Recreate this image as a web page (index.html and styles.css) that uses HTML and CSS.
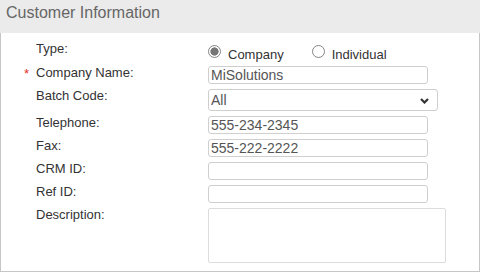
FILE: index.html
```html
<!DOCTYPE html>
<html lang="en">
  <head>
    <meta charset="UTF-8" />
    <meta name="viewport" content="width=device-width, initial-scale=1.0" />
    <title>Customer Information</title>
    <link rel="stylesheet" href="styles.css">
  </head>
  <body>
    <section class="panel">
      <h2 class="panel-title">Customer Information</h2>
      <div class="panel-body">
        <div class="row row-type">
          <span class="req"></span>
          <label class="label">Type:</label>
          <div class="choices">
            <label class="choice">
              <input type="radio" name="type" class="radio" checked />
              <span>Company</span>
            </label>
            <label class="choice">
              <input type="radio" name="type" class="radio" />
              <span>Individual</span>
            </label>
          </div>
        </div>
        <div class="row">
          <span class="req">*</span>
          <label class="label">Company Name:</label>
          <input class="field" type="text" value="MiSolutions" />
        </div>
        <div class="row row-select">
          <span class="req"></span>
          <label class="label">Batch Code:</label>
          <div class="select-wrap">
            <select class="select">
              <option>All</option>
            </select>
            <svg class="chevron" width="9" height="6" viewBox="0 0 9 6">
              <polyline points="1,1 4.5,4.5 8,1" fill="none" stroke="#333" stroke-width="2.2" />
            </svg>
          </div>
        </div>
        <div class="row">
          <span class="req"></span>
          <label class="label">Telephone:</label>
          <input class="field" type="text" value="555-234-2345" />
        </div>
        <div class="row">
          <span class="req"></span>
          <label class="label">Fax:</label>
          <input class="field" type="text" value="555-222-2222" />
        </div>
        <div class="row">
          <span class="req"></span>
          <label class="label">CRM ID:</label>
          <input class="field" type="text" />
        </div>
        <div class="row">
          <span class="req"></span>
          <label class="label">Ref ID:</label>
          <input class="field" type="text" />
        </div>
        <div class="row">
          <span class="req"></span>
          <label class="label">Description:</label>
          <textarea class="notes"></textarea>
        </div>
      </div>
    </section>
  </body>
</html>
```

FILE: styles.css
```css
* {
  margin: 0;
  padding: 0;
  box-sizing: border-box;
}

body {
  font-family: "Liberation Sans", Arial, sans-serif;
  color: #333;
  background: #fff;
}

.panel {
  width: 480px;
}

.panel-title {
  height: 33px;
  padding: 4px 0 0 6px;
  font-size: 16px;
  font-weight: normal;
  line-height: 18px;
  color: #666;
  background: #ebebeb;
}

.panel-body {
  height: 239px;
  padding: 8px 0 0 23px;
  border: 1px solid #c6c6c6;
  border-top: none;
}

.row {
  display: flex;
  align-items: flex-start;
  margin-bottom: 5px;
}

.row-select {
  margin-top: 1px;
}

.req {
  width: 12px;
  font-size: 13px;
  line-height: 15px;
  color: #e0301e;
}

.label {
  width: 172px;
  margin-top: -1px;
  font-size: 13px;
  line-height: 15px;
}

.row-type .label {
  margin-top: 0;
}

.choices {
  display: flex;
  height: 20px;
}

.choice {
  display: flex;
  align-items: flex-start;
  margin-right: 28px;
  font-size: 13px;
  line-height: 14px;
}

.choice span {
  padding-top: 7px;
}

.radio {
  appearance: none;
  width: 13px;
  height: 13px;
  margin: 4px 7px 0 0;
  border: 1px solid #858585;
  border-radius: 50%;
  background: #fff;
}

.radio:checked {
  background: radial-gradient(circle, #767676 0 3.8px, #fff 4.4px);
}

.field,
.select,
.notes {
  font-family: "Liberation Sans", Arial, sans-serif;
  font-size: 14px;
  color: #555;
  background: #fff;
  outline: none;
}

.field {
  width: 220px;
  height: 18px;
  padding: 0 2px;
  border: 1px solid #cfcfcf;
  border-radius: 3px;
}

.select-wrap {
  position: relative;
}

.select {
  appearance: none;
  width: 230px;
  height: 22px;
  padding: 0 2px;
  border: 1px solid #cfcfcf;
  border-radius: 3px;
}

.chevron {
  position: absolute;
  top: 9px;
  right: 9px;
}

.notes {
  width: 238px;
  height: 55px;
  border: 1px solid #dcdcdc;
  border-radius: 2px;
  resize: none;
}
```
